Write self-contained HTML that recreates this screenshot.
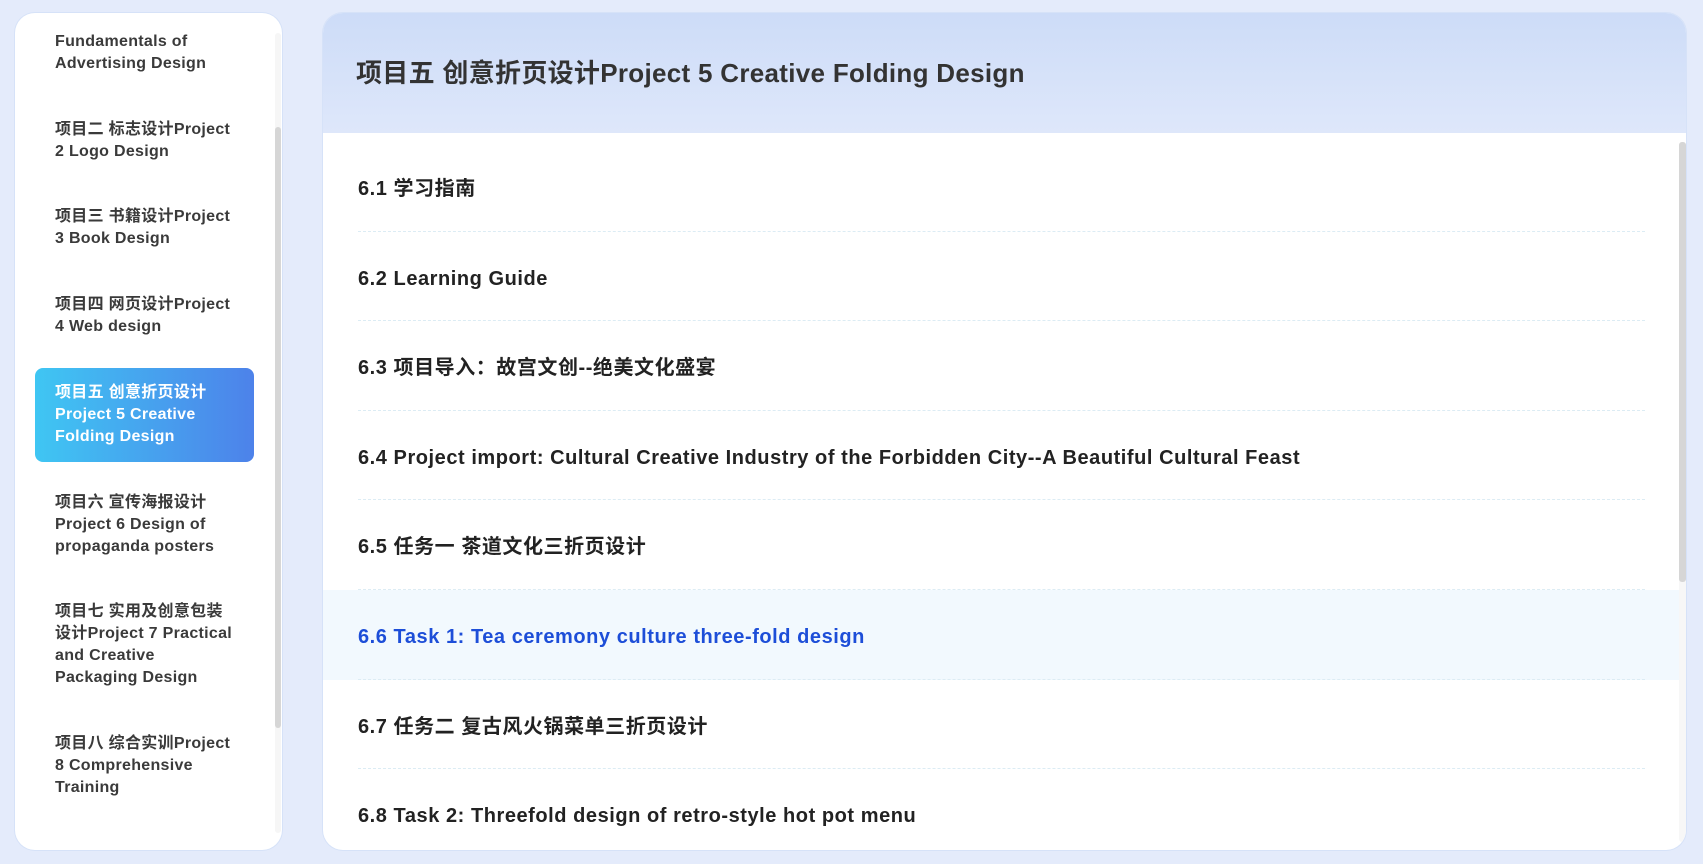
<!DOCTYPE html>
<html><head><meta charset="utf-8"><style>
*{margin:0;padding:0;box-sizing:border-box}
body{width:1703px;height:864px;background:#e4ebfb;font-family:"Liberation Sans","Noto Sans CJK SC",sans-serif;position:relative;overflow:hidden}
.side{position:absolute;left:15px;top:13px;width:267px;height:837px;background:#fff;border-radius:20px;overflow:hidden;box-shadow:0 0 0 1px #d6e2f8}
.sb{position:absolute;left:260px;top:114px;width:6px;height:601px;background:#d6d6d6;border-radius:3px}
.sbt{position:absolute;left:260px;top:20px;width:6px;height:800px;background:#f6f6f6;border-radius:3px}
.it{position:absolute;left:20px;width:219px;padding:14px 20px;font-size:16px;line-height:22px;font-weight:bold;color:#3a3a3a;letter-spacing:0.3px}
.it.a{background:linear-gradient(90deg,#3fc6f3,#4d82ea);color:#fff;border-radius:8px}
.main{position:absolute;left:323px;top:13px;width:1363px;height:837px;background:#fff;border-radius:20px;overflow:hidden;box-shadow:0 0 0 1px #d6e2f8}
.hd{height:120px;background:linear-gradient(180deg,#cddcf8,#dee7fa);padding-left:33px;line-height:120px;font-size:26px;font-weight:bold;color:#333;letter-spacing:0.3px}
.row{position:absolute;left:0;width:1356px;height:89.6px;font-size:20px;font-weight:bold;color:#222;padding-left:35px;line-height:95px;letter-spacing:0.55px}
.row::after{content:"";position:absolute;left:35px;width:1287px;bottom:0;border-bottom:1px dashed #dcecf4}
.row.a{background:#f2f9fe;color:#1d4ed8}
.msb{position:absolute;left:1356px;top:129px;width:7px;height:440px;background:#d6d6d6;border-radius:3px}
.msbt{position:absolute;left:1356px;top:129px;width:7px;height:700px;background:#f7f7f7;border-radius:3px}
</style></head><body>
<div class="side">
<div class="sbt"></div><div class="sb"></div>
<div class="it" style="top:4px">Fundamentals of<br>Advertising Design</div>
<div class="it" style="top:92px">项目二 标志设计Project<br>2 Logo Design</div>
<div class="it" style="top:179px">项目三 书籍设计Project<br>3 Book Design</div>
<div class="it" style="top:267px">项目四 网页设计Project<br>4 Web design</div>
<div class="it a" style="top:355px">项目五 创意折页设计<br>Project 5 Creative<br>Folding Design</div>
<div class="it" style="top:465px">项目六 宣传海报设计<br>Project 6 Design of<br>propaganda posters</div>
<div class="it" style="top:574px">项目七 实用及创意包装<br>设计Project 7 Practical<br>and Creative<br>Packaging Design</div>
<div class="it" style="top:706px">项目八 综合实训Project<br>8 Comprehensive<br>Training</div>
</div>
<div class="main">
<div class="hd">项目五 创意折页设计Project 5 Creative Folding Design</div>
<div class="msbt"></div><div class="msb"></div>
<div class="row" style="top:129px">6.1 学习指南</div>
<div class="row" style="top:218.6px">6.2 Learning Guide</div>
<div class="row" style="top:308.2px">6.3 项目导入：故宫文创--绝美文化盛宴</div>
<div class="row" style="top:397.8px">6.4 Project import: Cultural Creative Industry of the Forbidden City--A Beautiful Cultural Feast</div>
<div class="row" style="top:487.4px">6.5 任务一 茶道文化三折页设计</div>
<div class="row a" style="top:577px">6.6 Task 1: Tea ceremony culture three-fold design</div>
<div class="row" style="top:666.6px">6.7 任务二 复古风火锅菜单三折页设计</div>
<div class="row" style="top:756.2px">6.8 Task 2: Threefold design of retro-style hot pot menu</div>
</div>
</body></html>
